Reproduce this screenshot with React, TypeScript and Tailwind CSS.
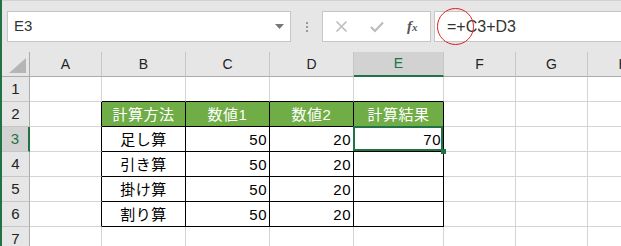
import React from "react";

const cols = ["A", "B", "C", "D", "E", "F", "G", "H"];

type Cell = { t?: string; align?: "l" | "c" | "r"; head?: boolean };

const data: Record<number, Record<string, Cell>> = {
  2: {
    B: { t: "計算方法", align: "c", head: true },
    C: { t: "数値1", align: "c", head: true },
    D: { t: "数値2", align: "c", head: true },
    E: { t: "計算結果", align: "c", head: true },
  },
  3: { B: { t: "足し算", align: "c" }, C: { t: "50", align: "r" }, D: { t: "20", align: "r" }, E: { t: "70", align: "r" } },
  4: { B: { t: "引き算", align: "c" }, C: { t: "50", align: "r" }, D: { t: "20", align: "r" } },
  5: { B: { t: "掛け算", align: "c" }, C: { t: "50", align: "r" }, D: { t: "20", align: "r" } },
  6: { B: { t: "割り算", align: "c" }, C: { t: "50", align: "r" }, D: { t: "20", align: "r" } },
};

const tableCols = ["B", "C", "D", "E"];

function GridCell({ row, col }: { row: number; col: string }) {
  const cell = data[row]?.[col];
  const inTable = row >= 2 && row <= 6 && tableCols.includes(col);
  const rightBlack = inTable || (col === "A" && row >= 2 && row <= 6);
  const bottomBlack = inTable || (row === 1 && tableCols.includes(col));
  const selected = row === 3 && col === "E";
  const cls = [
    "relative flex items-center border-r border-b overflow-visible",
    rightBlack ? "border-r-black" : "border-r-[#d4d4d4]",
    bottomBlack ? "border-b-black" : "border-b-[#d4d4d4]",
    cell?.head ? "bg-[#70ad47] text-white" : "bg-white text-black",
    cell?.align === "r" ? "justify-end pr-[2px]" : cell?.align === "c" ? "justify-center" : "",
  ].join(" ");
  return (
    <div className={cls}>
      {cell?.t && <span className="text-[15px] leading-none tracking-[0.5px]">{cell.t}</span>}
      {selected && (
        <>
          <div className="absolute left-[-1px] top-[-1px] right-0 bottom-0 border-2 border-[#217346] pointer-events-none" />
          <div className="absolute right-[-3px] bottom-[-3px] w-[5px] h-[5px] bg-[#217346] z-10" />
        </>
      )}
    </div>
  );
}

export default function App() {
  const rows = [1, 2, 3, 4, 5, 6, 7];
  return (
    <div
      className="w-[621px] h-[246px] overflow-hidden bg-[#e6e6e6] border-l-2 border-[#217346] flex flex-col"
      style={{ fontFamily: '"Liberation Sans", "Noto Sans CJK JP", sans-serif' }}
    >
      {/* Formula bar */}
      <div className="relative h-[52px] shrink-0 border-t border-[#d2d2d2] flex items-start pt-[10px]">
        <div className="ml-[5px] w-[284px] h-[31px] bg-white border border-[#c6c6c6] flex items-center justify-between pl-[6px] pr-[6px]">
          <span className="text-[15px] text-[#333]">E3</span>
          <svg width="9" height="6" viewBox="0 0 9 6">
            <path d="M0 0 L9 0 L4.5 5 Z" fill="#777" />
          </svg>
        </div>
        <div className="w-[31px] h-[31px] flex items-center justify-center">
          <div className="flex flex-col gap-[2px]">
            <div className="w-[2px] h-[2px] bg-[#9a9a9a]" />
            <div className="w-[2px] h-[2px] bg-[#9a9a9a]" />
            <div className="w-[2px] h-[2px] bg-[#9a9a9a]" />
          </div>
        </div>
        <div className="w-[109px] h-[31px] bg-white border border-[#c6c6c6] flex items-center">
          <div className="w-[36px] flex justify-center pl-[2px]">
            <svg width="13" height="13" viewBox="0 0 13 13">
              <path d="M1.5 1.5 L11.5 11.5 M11.5 1.5 L1.5 11.5" stroke="#bcbcbc" strokeWidth="1.6" />
            </svg>
          </div>
          <div className="w-[36px] flex justify-center">
            <svg width="14" height="12" viewBox="0 0 14 12">
              <path d="M1 6 L5 10 L13 1.5" stroke="#bcbcbc" strokeWidth="2.2" fill="none" />
            </svg>
          </div>
          <div className="w-[36px] flex justify-center">
            <span
              className="italic text-[#555] text-[15px] leading-none font-bold"
              style={{ fontFamily: '"Liberation Serif", serif' }}
            >
              f<span className="text-[11px]">x</span>
            </span>
          </div>
        </div>
        <div className="ml-[3px] flex-1 h-[31px] bg-white border border-r-0 border-[#c6c6c6] flex items-center pl-[12px]">
          <span className="text-[16px] text-[#333]">=+C3+D3</span>
        </div>
        <div className="absolute left-[435px] top-[7px] w-[37px] h-[37px] rounded-full border-[1.5px] border-[#e0201e] pointer-events-none" />
      </div>

      {/* Sheet grid */}
      <div className="flex-1 w-[660px] grid grid-cols-[28px_72px_84px_84px_84px_90px_72px_72px_72px] grid-rows-[25px_repeat(7,25px)]">
        {/* corner */}
        <div className="bg-[#e6e6e6] border-r border-b border-[#ababab] flex items-end justify-end p-[3px]">
          <svg width="17" height="15" viewBox="0 0 17 15">
            <path d="M17 0 L17 15 L0 15 Z" fill="#b5b5b5" />
          </svg>
        </div>
        {cols.map((c) => (
          <div
            key={c}
            className={
              c === "E"
                ? "bg-[#d2d2d2] border-r border-r-[#c6c6c6] border-b-2 border-b-[#217346] flex items-center justify-center text-[14px] text-[#217346]"
                : "bg-[#e6e6e6] border-r border-r-[#c6c6c6] border-b border-b-[#ababab] flex items-center justify-center text-[14px] text-[#222]"
            }
          >
            {c}
          </div>
        ))}
        {rows.map((r) => (
          <React.Fragment key={r}>
            <div
              className={
                r === 3
                  ? "bg-[#d2d2d2] border-r-2 border-r-[#217346] border-b border-b-[#c6c6c6] flex items-center justify-center text-[15px] text-[#217346]"
                  : "bg-[#e6e6e6] border-r border-r-[#ababab] border-b border-b-[#c6c6c6] flex items-center justify-center text-[15px] text-[#222]"
              }
            >
              {r}
            </div>
            {cols.map((c) => (
              <GridCell key={c} row={r} col={c} />
            ))}
          </React.Fragment>
        ))}
      </div>
    </div>
  );
}
